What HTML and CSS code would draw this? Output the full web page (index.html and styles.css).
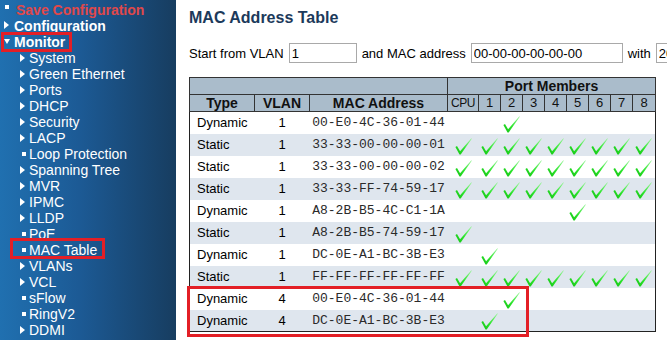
FILE: index.html
```html
<!DOCTYPE html>
<html>
<head>
<meta charset="utf-8">
<title>MAC Address Table</title>
<link rel="stylesheet" href="styles.css">
</head>
<body>
<svg width="0" height="0" class="defs" aria-hidden="true">
  <defs>
    <linearGradient id="g" x1="0" y1="1" x2="1" y2="0">
      <stop offset="0" stop-color="#10c010"/>
      <stop offset="0.45" stop-color="#2ee62e"/>
      <stop offset="1" stop-color="#a0f5a0"/>
    </linearGradient>
    <symbol id="chk" viewBox="0 0 17 17">
      <path d="M0.4 8.9 L2 8.1 L5.1 13.2 L16.4 0.3 L16.8 0.8 L5.7 16.4 L4.5 16.4 Z" fill="url(#g)"/>
    </symbol>
  </defs>
</svg>
<div class="page">
  <nav class="sidebar">
    <ul class="nav">
      <li class="top save"><span class="icon"><span class="sq"></span></span>Save Configuration</li>
      <li class="top"><span class="icon"><span class="tri-r"></span></span>Configuration</li>
      <li class="top"><span class="icon"><span class="tri-d"></span></span>Monitor</li>
      <li class="sub"><span class="icon"><span class="tri-r"></span></span>System</li>
      <li class="sub"><span class="icon"><span class="tri-r"></span></span>Green Ethernet</li>
      <li class="sub"><span class="icon"><span class="tri-r"></span></span>Ports</li>
      <li class="sub"><span class="icon"><span class="tri-r"></span></span>DHCP</li>
      <li class="sub"><span class="icon"><span class="tri-r"></span></span>Security</li>
      <li class="sub"><span class="icon"><span class="tri-r"></span></span>LACP</li>
      <li class="sub"><span class="icon"><span class="sq"></span></span>Loop Protection</li>
      <li class="sub"><span class="icon"><span class="tri-r"></span></span>Spanning Tree</li>
      <li class="sub"><span class="icon"><span class="tri-r"></span></span>MVR</li>
      <li class="sub"><span class="icon"><span class="tri-r"></span></span>IPMC</li>
      <li class="sub"><span class="icon"><span class="tri-r"></span></span>LLDP</li>
      <li class="sub"><span class="icon"><span class="sq"></span></span>PoE</li>
      <li class="sub"><span class="icon"><span class="sq"></span></span>MAC Table</li>
      <li class="sub"><span class="icon"><span class="tri-r"></span></span>VLANs</li>
      <li class="sub"><span class="icon"><span class="tri-r"></span></span>VCL</li>
      <li class="sub"><span class="icon"><span class="sq"></span></span>sFlow</li>
      <li class="sub"><span class="icon"><span class="sq"></span></span>RingV2</li>
      <li class="sub"><span class="icon"><span class="tri-r"></span></span>DDMI</li>
    </ul>
  </nav>
  <main class="main">
    <h1 class="title">MAC Address Table</h1>
    <div class="filter">
      <span>Start from VLAN</span>
      <input class="field f-vlan" type="text" value="1">
      <span>and MAC address</span>
      <input class="field f-mac" type="text" value="00-00-00-00-00-00">
      <span>with</span>
      <input class="field f-num" type="text" value="20">
    </div>
    <table class="mac">
      <colgroup>
        <col class="w-type"><col class="w-vlan"><col class="w-addr"><col class="w-cpu">
        <col class="w-p"><col class="w-p"><col class="w-p"><col class="w-p">
        <col class="w-p"><col class="w-p"><col class="w-p"><col class="w-p8">
      </colgroup>
      <thead>
        <tr><th colspan="3"></th><th colspan="9">Port Members</th></tr>
        <tr><th>Type</th><th>VLAN</th><th>MAC Address</th><th class="n cpu">CPU</th><th class="n">1</th><th class="n">2</th><th class="n">3</th><th class="n">4</th><th class="n">5</th><th class="n">6</th><th class="n">7</th><th class="n">8</th></tr>
      </thead>
      <tbody>
        <tr><td class="t">Dynamic</td><td class="v">1</td><td class="a">00-E0-4C-36-01-44</td><td></td><td></td><td class="c"><svg class="chk"><use href="#chk"/></svg></td><td></td><td></td><td></td><td></td><td></td><td></td></tr>
        <tr><td class="t">Static</td><td class="v">1</td><td class="a">33-33-00-00-00-01</td><td class="c"><svg class="chk"><use href="#chk"/></svg></td><td class="c"><svg class="chk"><use href="#chk"/></svg></td><td class="c"><svg class="chk"><use href="#chk"/></svg></td><td class="c"><svg class="chk"><use href="#chk"/></svg></td><td class="c"><svg class="chk"><use href="#chk"/></svg></td><td class="c"><svg class="chk"><use href="#chk"/></svg></td><td class="c"><svg class="chk"><use href="#chk"/></svg></td><td class="c"><svg class="chk"><use href="#chk"/></svg></td><td class="c"><svg class="chk"><use href="#chk"/></svg></td></tr>
        <tr><td class="t">Static</td><td class="v">1</td><td class="a">33-33-00-00-00-02</td><td class="c"><svg class="chk"><use href="#chk"/></svg></td><td class="c"><svg class="chk"><use href="#chk"/></svg></td><td class="c"><svg class="chk"><use href="#chk"/></svg></td><td class="c"><svg class="chk"><use href="#chk"/></svg></td><td class="c"><svg class="chk"><use href="#chk"/></svg></td><td class="c"><svg class="chk"><use href="#chk"/></svg></td><td class="c"><svg class="chk"><use href="#chk"/></svg></td><td class="c"><svg class="chk"><use href="#chk"/></svg></td><td class="c"><svg class="chk"><use href="#chk"/></svg></td></tr>
        <tr><td class="t">Static</td><td class="v">1</td><td class="a">33-33-FF-74-59-17</td><td class="c"><svg class="chk"><use href="#chk"/></svg></td><td class="c"><svg class="chk"><use href="#chk"/></svg></td><td class="c"><svg class="chk"><use href="#chk"/></svg></td><td class="c"><svg class="chk"><use href="#chk"/></svg></td><td class="c"><svg class="chk"><use href="#chk"/></svg></td><td class="c"><svg class="chk"><use href="#chk"/></svg></td><td class="c"><svg class="chk"><use href="#chk"/></svg></td><td class="c"><svg class="chk"><use href="#chk"/></svg></td><td class="c"><svg class="chk"><use href="#chk"/></svg></td></tr>
        <tr><td class="t">Dynamic</td><td class="v">1</td><td class="a">A8-2B-B5-4C-C1-1A</td><td></td><td></td><td></td><td></td><td></td><td class="c"><svg class="chk"><use href="#chk"/></svg></td><td></td><td></td><td></td></tr>
        <tr><td class="t">Static</td><td class="v">1</td><td class="a">A8-2B-B5-74-59-17</td><td class="c"><svg class="chk"><use href="#chk"/></svg></td><td></td><td></td><td></td><td></td><td></td><td></td><td></td><td></td></tr>
        <tr><td class="t">Dynamic</td><td class="v">1</td><td class="a">DC-0E-A1-BC-3B-E3</td><td></td><td class="c"><svg class="chk"><use href="#chk"/></svg></td><td></td><td></td><td></td><td></td><td></td><td></td><td></td></tr>
        <tr><td class="t">Static</td><td class="v">1</td><td class="a">FF-FF-FF-FF-FF-FF</td><td class="c"><svg class="chk"><use href="#chk"/></svg></td><td class="c"><svg class="chk"><use href="#chk"/></svg></td><td class="c"><svg class="chk"><use href="#chk"/></svg></td><td class="c"><svg class="chk"><use href="#chk"/></svg></td><td class="c"><svg class="chk"><use href="#chk"/></svg></td><td class="c"><svg class="chk"><use href="#chk"/></svg></td><td class="c"><svg class="chk"><use href="#chk"/></svg></td><td class="c"><svg class="chk"><use href="#chk"/></svg></td><td class="c"><svg class="chk"><use href="#chk"/></svg></td></tr>
        <tr><td class="t">Dynamic</td><td class="v">4</td><td class="a">00-E0-4C-36-01-44</td><td></td><td></td><td class="c"><svg class="chk"><use href="#chk"/></svg></td><td></td><td></td><td></td><td></td><td></td><td></td></tr>
        <tr><td class="t">Dynamic</td><td class="v">4</td><td class="a">DC-0E-A1-BC-3B-E3</td><td></td><td class="c"><svg class="chk"><use href="#chk"/></svg></td><td></td><td></td><td></td><td></td><td></td><td></td><td></td></tr>
      </tbody>
    </table>
  </main>
</div>
<div class="note note-monitor"></div>
<div class="note note-mac"></div>
<div class="note note-rows"></div>
</body>
</html>
```

FILE: styles.css
```css
* { box-sizing: border-box; }
html, body { margin: 0; padding: 0; }
body {
  width: 667px;
  height: 340px;
  overflow: hidden;
  position: relative;
  background: #fff;
  font-family: "Liberation Sans", Arial, sans-serif;
}
.defs { position: absolute; width: 0; height: 0; }
.page { display: flex; height: 340px; }

/* Sidebar */
.sidebar {
  width: 176px;
  flex: none;
  padding-top: 2px;
  color: #fff;
  font-size: 14px;
  background: linear-gradient(to right, #2070b0 0%, #1c5a95 45%, #173d60 100%);
}
.nav { list-style: none; margin: 0; padding: 0; }
.nav li {
  display: flex;
  align-items: center;
  height: 16px;
  line-height: 16px;
  white-space: nowrap;
}
.top { padding-left: 4px; font-weight: bold; }
.sub { padding-left: 20px; }
.icon { flex: none; display: flex; align-items: center; }
.top .icon { width: 10px; }
.sub .icon { width: 9px; }
.save { color: #e0484a; padding-left: 5px; }
.save .icon { width: 11px; align-self: flex-start; padding-top: 3px; }
.sq { width: 4px; height: 4px; background: #fff; }
.sub .sq { margin-left: 2px; }
.tri-r {
  width: 0; height: 0;
  border-left: 5px solid #fff;
  border-top: 4.5px solid transparent;
  border-bottom: 4.5px solid transparent;
}
.top .tri-r { margin-top: -2px; }
.tri-d {
  width: 0; height: 0;
  margin-top: -2px;
  border-top: 5px solid #fff;
  border-left: 3.5px solid transparent;
  border-right: 3.5px solid transparent;
}

/* Main */
.main {
  flex: 1;
  min-width: 0;
  overflow: hidden;
  padding: 8px 0 0 13px;
  font-size: 13px;
  color: #000;
}
.title {
  margin: 0;
  font-size: 16px;
  line-height: 20px;
  font-weight: bold;
  color: #1c3a5b;
}
.filter {
  display: flex;
  align-items: center;
  margin-top: 15px;
  height: 20px;
  white-space: nowrap;
}
.filter > * { flex: none; }
.field {
  height: 20px;
  margin: 0 5px;
  padding: 0 2px;
  border: 1px solid #a9a9a9;
  border-radius: 0;
  background: #fff;
  color: #000;
  font: 13px "Liberation Sans", Arial, sans-serif;
  outline: none;
}
.f-vlan { width: 68px; }
.f-mac { width: 152px; }
.f-num { width: 60px; }

/* Table */
.mac {
  margin-top: 14px;
  border-collapse: collapse;
  table-layout: fixed;
  width: 466px;
  border: 1px solid #222;
}
.w-type { width: 65px; }
.w-vlan { width: 55px; }
.w-addr { width: 138px; }
.w-cpu { width: 31px; }
.w-p { width: 22px; }
.w-p8 { width: 23px; }
.mac th {
  background: #aabccb;
  border: 1px solid #333;
  padding: 0;
  height: 17px;
  line-height: 16px;
  font-size: 14px;
  font-weight: bold;
  color: #111;
  text-align: center;
  white-space: nowrap;
}
.mac th.n { font-weight: normal; font-size: 13px; }
.mac th.cpu { font-size: 12px; letter-spacing: -0.4px; }
.mac td {
  height: 22px;
  padding: 0;
  white-space: nowrap;
  vertical-align: middle;
}
.mac tbody tr:nth-child(even) td { background: #dfe6ee; }
.mac td.t { padding-left: 7px; }
.mac td.v { text-align: center; }
.mac td.a {
  text-align: center;
  font-family: "Liberation Mono", "Courier New", monospace;
  font-size: 13px;
  color: #2a2a2a;
}
.chk { display: block; width: 17px; height: 17px; margin: 3px auto 0; overflow: visible; }

/* Annotation boxes */
.note { position: absolute; border: 3px solid #e31f26; }
.note-monitor { left: 1px; top: 32px; width: 71px; height: 20px; }
.note-mac { left: 10px; top: 238px; width: 95px; height: 21px; }
.note-rows { left: 187px; top: 286px; width: 342px; height: 51px; }
```
